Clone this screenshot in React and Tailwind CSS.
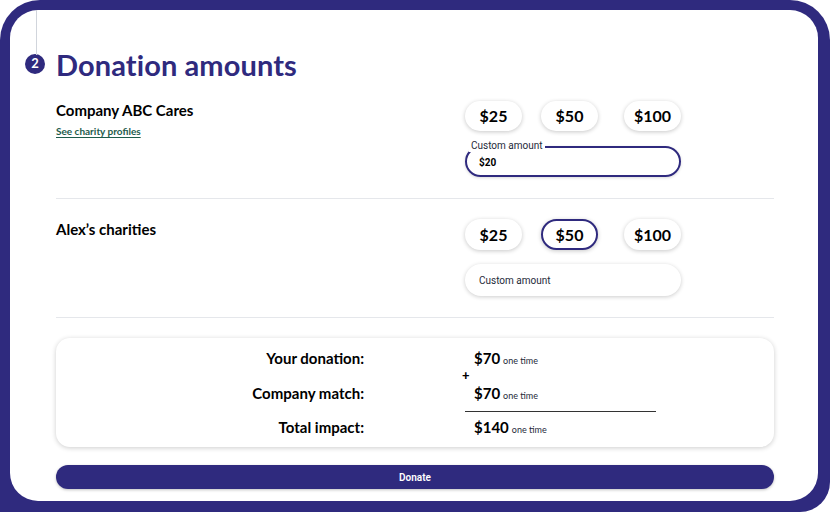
const PURPLE = 'bg-[#2f2a7e]';

function AmountButton({ label, selected, className = '', h = 'h-[31px]' }) {
  return (
    <button
      className={`${h} w-[57px] rounded-full bg-white text-[16px] font-bold text-black shadow-[0_1px_4px_rgba(0,0,0,0.22)] ${
        selected ? 'border-2 border-[#2f2a7e]' : ''
      } ${className}`}
    >
      {label}
    </button>
  );
}

function AmountRow({ selected, h }) {
  return (
    <div className="flex">
      <AmountButton h={h} label="$25" selected={selected === 25} />
      <AmountButton h={h} label="$50" selected={selected === 50} className="ml-[19px]" />
      <AmountButton h={h} label="$100" selected={selected === 100} className="ml-[26px]" />
    </div>
  );
}

export default function App() {
  return (
    <div
      className={`w-[830px] h-[512px] ${PURPLE} rounded-tl-[40px] rounded-tr-[40px] rounded-br-[30px] pt-[10px] pl-[10px] pr-[12px] pb-[11px]`}
      style={{ fontFamily: 'Lato, "Noto Sans", sans-serif' }}
    >
      <div className="relative h-full rounded-[28px] bg-white">
        {/* stepper line */}
        <div className="absolute left-[26px] top-0 h-[45px] w-px bg-gray-300" />

        {/* title */}
        <div className="box-content flex h-[30px] items-center pl-[15px] pt-[39px]">
          <div className={`flex h-[20px] w-[20px] items-center justify-center rounded-full ${PURPLE} text-[13px] font-bold text-white`}>
            2
          </div>
          <h1 className="ml-[11px] text-[29px] font-bold leading-none tracking-[0.1px] text-[#2f2a7e]">
            Donation amounts
          </h1>
        </div>

        <div className="pl-[46px] pr-[44px]">
          {/* Company section */}
          <div className="mt-[22px] flex">
            <div className="w-[409px]">
              <div className="text-[15px] font-bold leading-[18px] text-black">Company ABC Cares</div>
              <a className="mt-[5px] block text-[10px] font-bold text-[#1e5c4c] underline underline-offset-2">
                See charity profiles
              </a>
            </div>
            <div className="w-[216px]">
              <AmountRow h="h-[30px]" />
              <div className="relative mt-[15px] h-[31px] rounded-full border-2 border-[#2f2a7e] shadow-[0_1px_3px_rgba(0,0,0,0.15)]">
                <span
                  className="absolute left-[2px] top-[-8px] bg-white px-[2px] text-[10px] leading-[12px] text-gray-800"
                  style={{ fontFamily: 'Roboto, sans-serif' }}
                >
                  Custom amount
                </span>
                <span
                  className="absolute left-[12px] top-[7px] text-[10px] font-bold text-black"
                  style={{ fontFamily: 'Roboto, sans-serif' }}
                >
                  $20
                </span>
              </div>
            </div>
          </div>

          <div className="mt-[21px] h-px bg-gray-200" />

          {/* Alex section */}
          <div className="mt-[20px] flex">
            <div className="w-[409px] pt-[1px]">
              <div className="text-[15px] font-bold leading-[18px] text-black">Alex’s charities</div>
            </div>
            <div className="w-[216px]">
              <AmountRow selected={50} />
              <div className="mt-[14px] flex h-[32px] items-center rounded-full bg-white pl-[14px] shadow-[0_1px_4px_rgba(0,0,0,0.2)]">
                <span className="text-[10px] text-gray-800" style={{ fontFamily: 'Roboto, sans-serif' }}>
                  Custom amount
                </span>
              </div>
            </div>
          </div>

          <div className="mt-[21px] h-px bg-gray-200" />

          {/* summary */}
          <div className="mt-[20px] flex h-[109px] rounded-[14px] bg-white shadow-[0_1px_5px_rgba(0,0,0,0.2)]">
            <div className="w-[308px] pt-[11px] text-right text-[15px] font-bold text-black">
              <div className="h-[18px] leading-[18px]">Your donation:</div>
              <div className="mt-[17px] h-[18px] leading-[18px]">Company match:</div>
              <div className="mt-[16px] h-[18px] leading-[18px]">Total impact:</div>
            </div>
            <div className="relative ml-[101px] w-[191px] pt-[11px]">
              <span className="absolute left-[-3px] top-[31px] text-[13px] font-black leading-[12px] text-black">+</span>
              <div className="h-[18px] pl-[9px] leading-[18px]">
                <span className="text-[15px] font-bold text-black">$70</span>
                <span className="ml-[3px] text-[9px] text-gray-800">one time</span>
              </div>
              <div className="mt-[17px] h-[18px] pl-[9px] leading-[18px]">
                <span className="text-[15px] font-bold text-black">$70</span>
                <span className="ml-[3px] text-[9px] text-gray-800">one time</span>
              </div>
              <div className="mt-[9px] h-px bg-[#333]" />
              <div className="mt-[6px] h-[18px] pl-[9px] leading-[18px]">
                <span className="text-[15px] font-bold text-black">$140</span>
                <span className="ml-[3px] text-[9px] text-gray-800">one time</span>
              </div>
            </div>
          </div>

          <button
            className={`mt-[18px] flex h-[24px] w-full items-center justify-center rounded-full ${PURPLE} text-[10px] font-semibold text-white shadow-[0_1px_3px_rgba(0,0,0,0.25)]`}
            style={{ fontFamily: 'Roboto, sans-serif' }}
          >
            Donate
          </button>
        </div>
      </div>
    </div>
  );
}
